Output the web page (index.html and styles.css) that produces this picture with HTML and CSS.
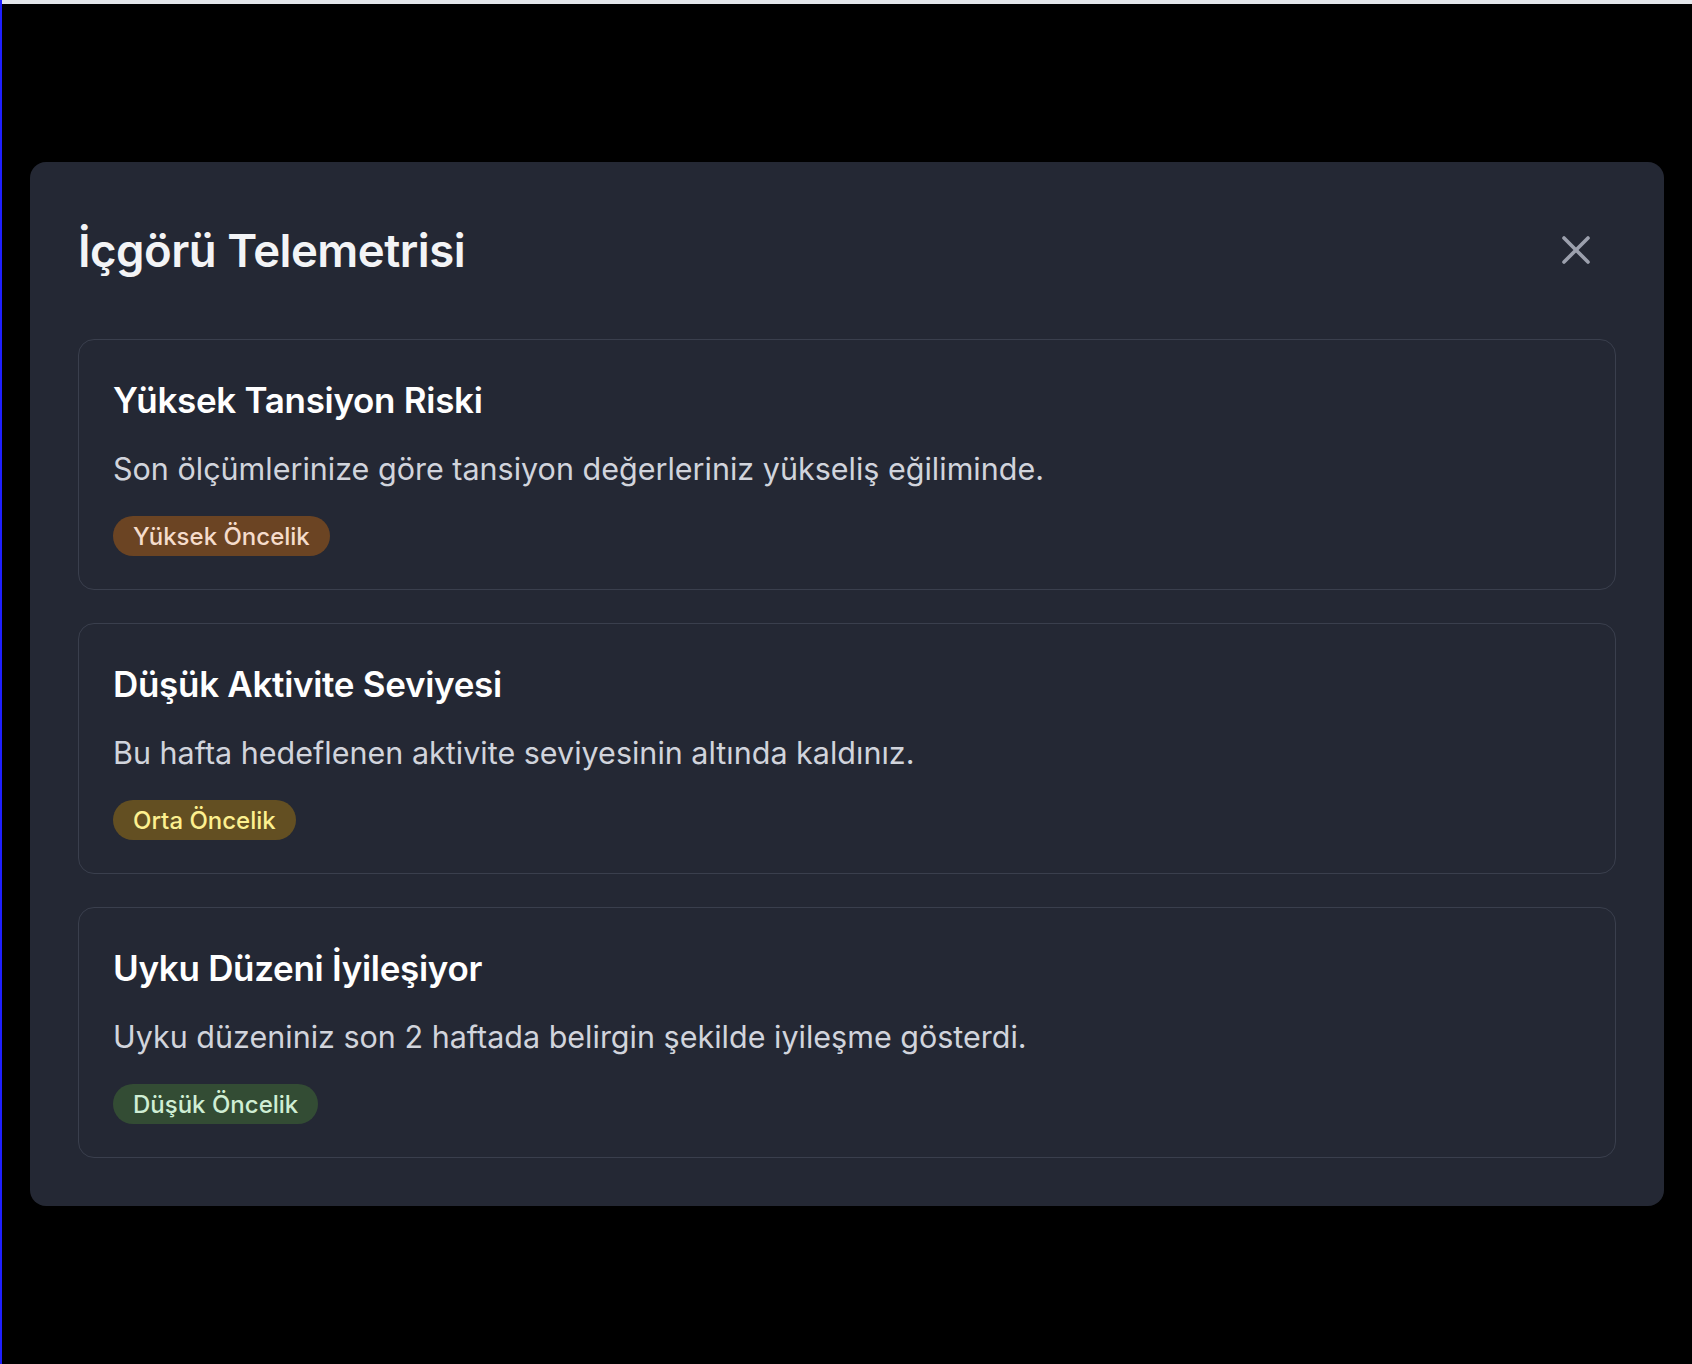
FILE: index.html
```html
<!DOCTYPE html>
<html lang="tr">
<head>
<meta charset="utf-8">
<title>İçgörü Telemetrisi</title>
<link rel="stylesheet" href="styles.css">
</head>
<body>
<div class="topbar"></div>
<main class="stage">
  <section class="modal">
    <header class="modal-head">
      <h1 class="modal-title">İçgörü Telemetrisi</h1>
      <button class="close" aria-label="Kapat">
        <svg width="28" height="28" viewBox="0 0 28 28" fill="none" stroke="currentColor" stroke-width="3.6" stroke-linecap="round"><path d="M2 2 L26 26 M26 2 L2 26"/></svg>
      </button>
    </header>
    <div class="list">
      <article class="card">
        <h2 class="card-title">Yüksek Tansiyon Riski</h2>
        <p class="card-desc">Son ölçümlerinize göre tansiyon değerleriniz yükseliş eğiliminde.</p>
        <span class="badge badge-high">Yüksek Öncelik</span>
      </article>
      <article class="card">
        <h2 class="card-title">Düşük Aktivite Seviyesi</h2>
        <p class="card-desc">Bu hafta hedeflenen aktivite seviyesinin altında kaldınız.</p>
        <span class="badge badge-mid">Orta Öncelik</span>
      </article>
      <article class="card">
        <h2 class="card-title">Uyku Düzeni İyileşiyor</h2>
        <p class="card-desc">Uyku düzeniniz son 2 haftada belirgin şekilde iyileşme gösterdi.</p>
        <span class="badge badge-low">Düşük Öncelik</span>
      </article>
    </div>
  </section>
</main>
</body>
</html>
```

FILE: styles.css
```css
html, body {
  margin: 0;
  padding: 0;
  background: #000;
  height: 100%;
}
body {
  border-left: 2px solid #1f1fff;
  font-family: Inter, "Noto Sans", sans-serif;
  box-sizing: border-box;
}
.topbar {
  height: 4px;
  background: #e3e6ea;
}
.stage {
  padding: 158px 28px 0 28px;
}
.modal {
  background: #242834;
  border-radius: 16px;
  padding: 48px;
}
.modal-head {
  display: flex;
  justify-content: space-between;
  align-items: center;
  height: 80px;
  margin-bottom: 49px;
}
.modal-title {
  margin: 0;
  font-size: 45.5px;
  font-weight: 600;
  color: #f3f4f6;
  letter-spacing: -0.5px;
}
.close {
  background: none;
  border: 0;
  padding: 0;
  margin-right: 26px;
  color: #9ca0ad;
  display: flex;
}
.list {
  display: flex;
  flex-direction: column;
  gap: 33px;
}
.card {
  border: 1px solid #3a3f4d;
  border-radius: 16px;
  padding: 38px 32px 33px 34px;
}
.card-title {
  margin: 0;
  font-size: 35px;
  line-height: 44px;
  font-weight: 600;
  color: #ffffff;
  letter-spacing: -0.3px;
}
.card-desc {
  margin: 27px 0 27px;
  font-size: 30.5px;
  line-height: 40px;
  color: #d1d4dc;
}
.badge {
  display: inline-flex;
  align-items: center;
  height: 40px;
  padding: 0 20px;
  border-radius: 20px;
  font-size: 24px;
  font-weight: 500;
}
.badge-high { background: #6b4423; color: #f5dccb; }
.badge-mid { background: #634f22; color: #fdf08f; }
.badge-low { background: #334c34; color: #cfeed4; }
```
